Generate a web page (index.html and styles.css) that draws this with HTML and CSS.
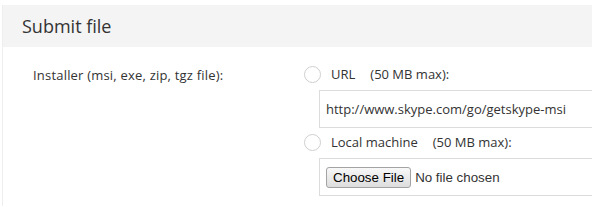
FILE: index.html
```html
<!DOCTYPE html>
<html lang="en">
<head>
    <meta charset="UTF-8">
    <title>Submit file</title>
    <link rel="stylesheet" href="styles.css">
</head>
<body>
    <div class="panel">
        <div class="panel-header">Submit file</div>
        <div class="panel-body">
            <div class="form-row">
                <label class="field-label">Installer (msi, exe, zip, tgz file):</label>
                <div class="field">
                    <label class="radio-line">
                        <input type="radio" name="source" value="url">
                        <span class="radio-mark"></span>
                        <span class="opt-name">URL</span>
                        <span class="opt-note">(50 MB max):</span>
                    </label>
                    <div class="box box-url">
                        <input type="text" class="url-input" value="http://www.skype.com/go/getskype-msi">
                    </div>
                    <label class="radio-line">
                        <input type="radio" name="source" value="local">
                        <span class="radio-mark"></span>
                        <span class="opt-name">Local machine</span>
                        <span class="opt-note">(50 MB max):</span>
                    </label>
                    <div class="box box-file">
                        <input type="file" class="file-input">
                    </div>
                </div>
            </div>
        </div>
    </div>
</body>
</html>
```

FILE: styles.css
```css
body {
    margin: 0;
    font-family: "Open Sans", "Liberation Sans", sans-serif;
    color: #333;
    background-color: #fff;
    overflow: hidden;
}
.panel {
    margin: 5px 0 0 2px;
    border-left: 1px solid #eeeeee;
}
.panel-header {
    height: 42px;
    line-height: 42px;
    padding-left: 19px;
    background-color: #f4f4f4;
    font-size: 18px;
    color: #333;
}
.panel-body {
    padding: 15px 0 10px 30px;
}
.form-row {
    display: grid;
    grid-template-columns: 270px 1fr;
}
.field-label {
    font-size: 13px;
    line-height: 20px;
    padding-top: 3px;
    letter-spacing: 0.2px;
}
.field {
    display: flex;
    flex-direction: column;
    align-items: stretch;
    overflow: hidden;
}
.radio-line {
    display: flex;
    align-items: center;
    height: 24px;
    font-size: 13px;
    padding-left: 1px;
}
.radio-line input {
    display: none;
}
.radio-mark {
    width: 15px;
    height: 15px;
    border: 1px solid #cfcfcf;
    border-radius: 50%;
    background-color: #fff;
    margin-right: 10px;
}
.opt-name {
    margin-right: 15px;
}
.box {
    height: 36px;
    border: 1px solid #dcdcdc;
    border-right: none;
    margin-left: 16px;
    display: flex;
    align-items: center;
    padding-left: 6px;
}
.box-url {
    margin-top: 4px;
    margin-bottom: 2px;
}
.box-file {
    margin-top: 4px;
}
.url-input {
    border: none;
    outline: none;
    padding: 0;
    width: 100%;
    font-family: "Open Sans", "Liberation Sans", sans-serif;
    font-size: 13px;
    color: #333;
}
.file-input {
    font-family: "Liberation Sans", Arial, sans-serif;
    font-size: 13.33px;
    color: #333;
}
.file-input::file-selector-button {
    font-family: "Liberation Sans", Arial, sans-serif;
    font-size: 13.33px;
    color: #000;
    background: linear-gradient(#f8f8f8, #dddddd);
    border: 1px solid #a3a3a3;
    border-radius: 3px;
    padding: 2px 6px;
    margin-right: 4px;
}
```
